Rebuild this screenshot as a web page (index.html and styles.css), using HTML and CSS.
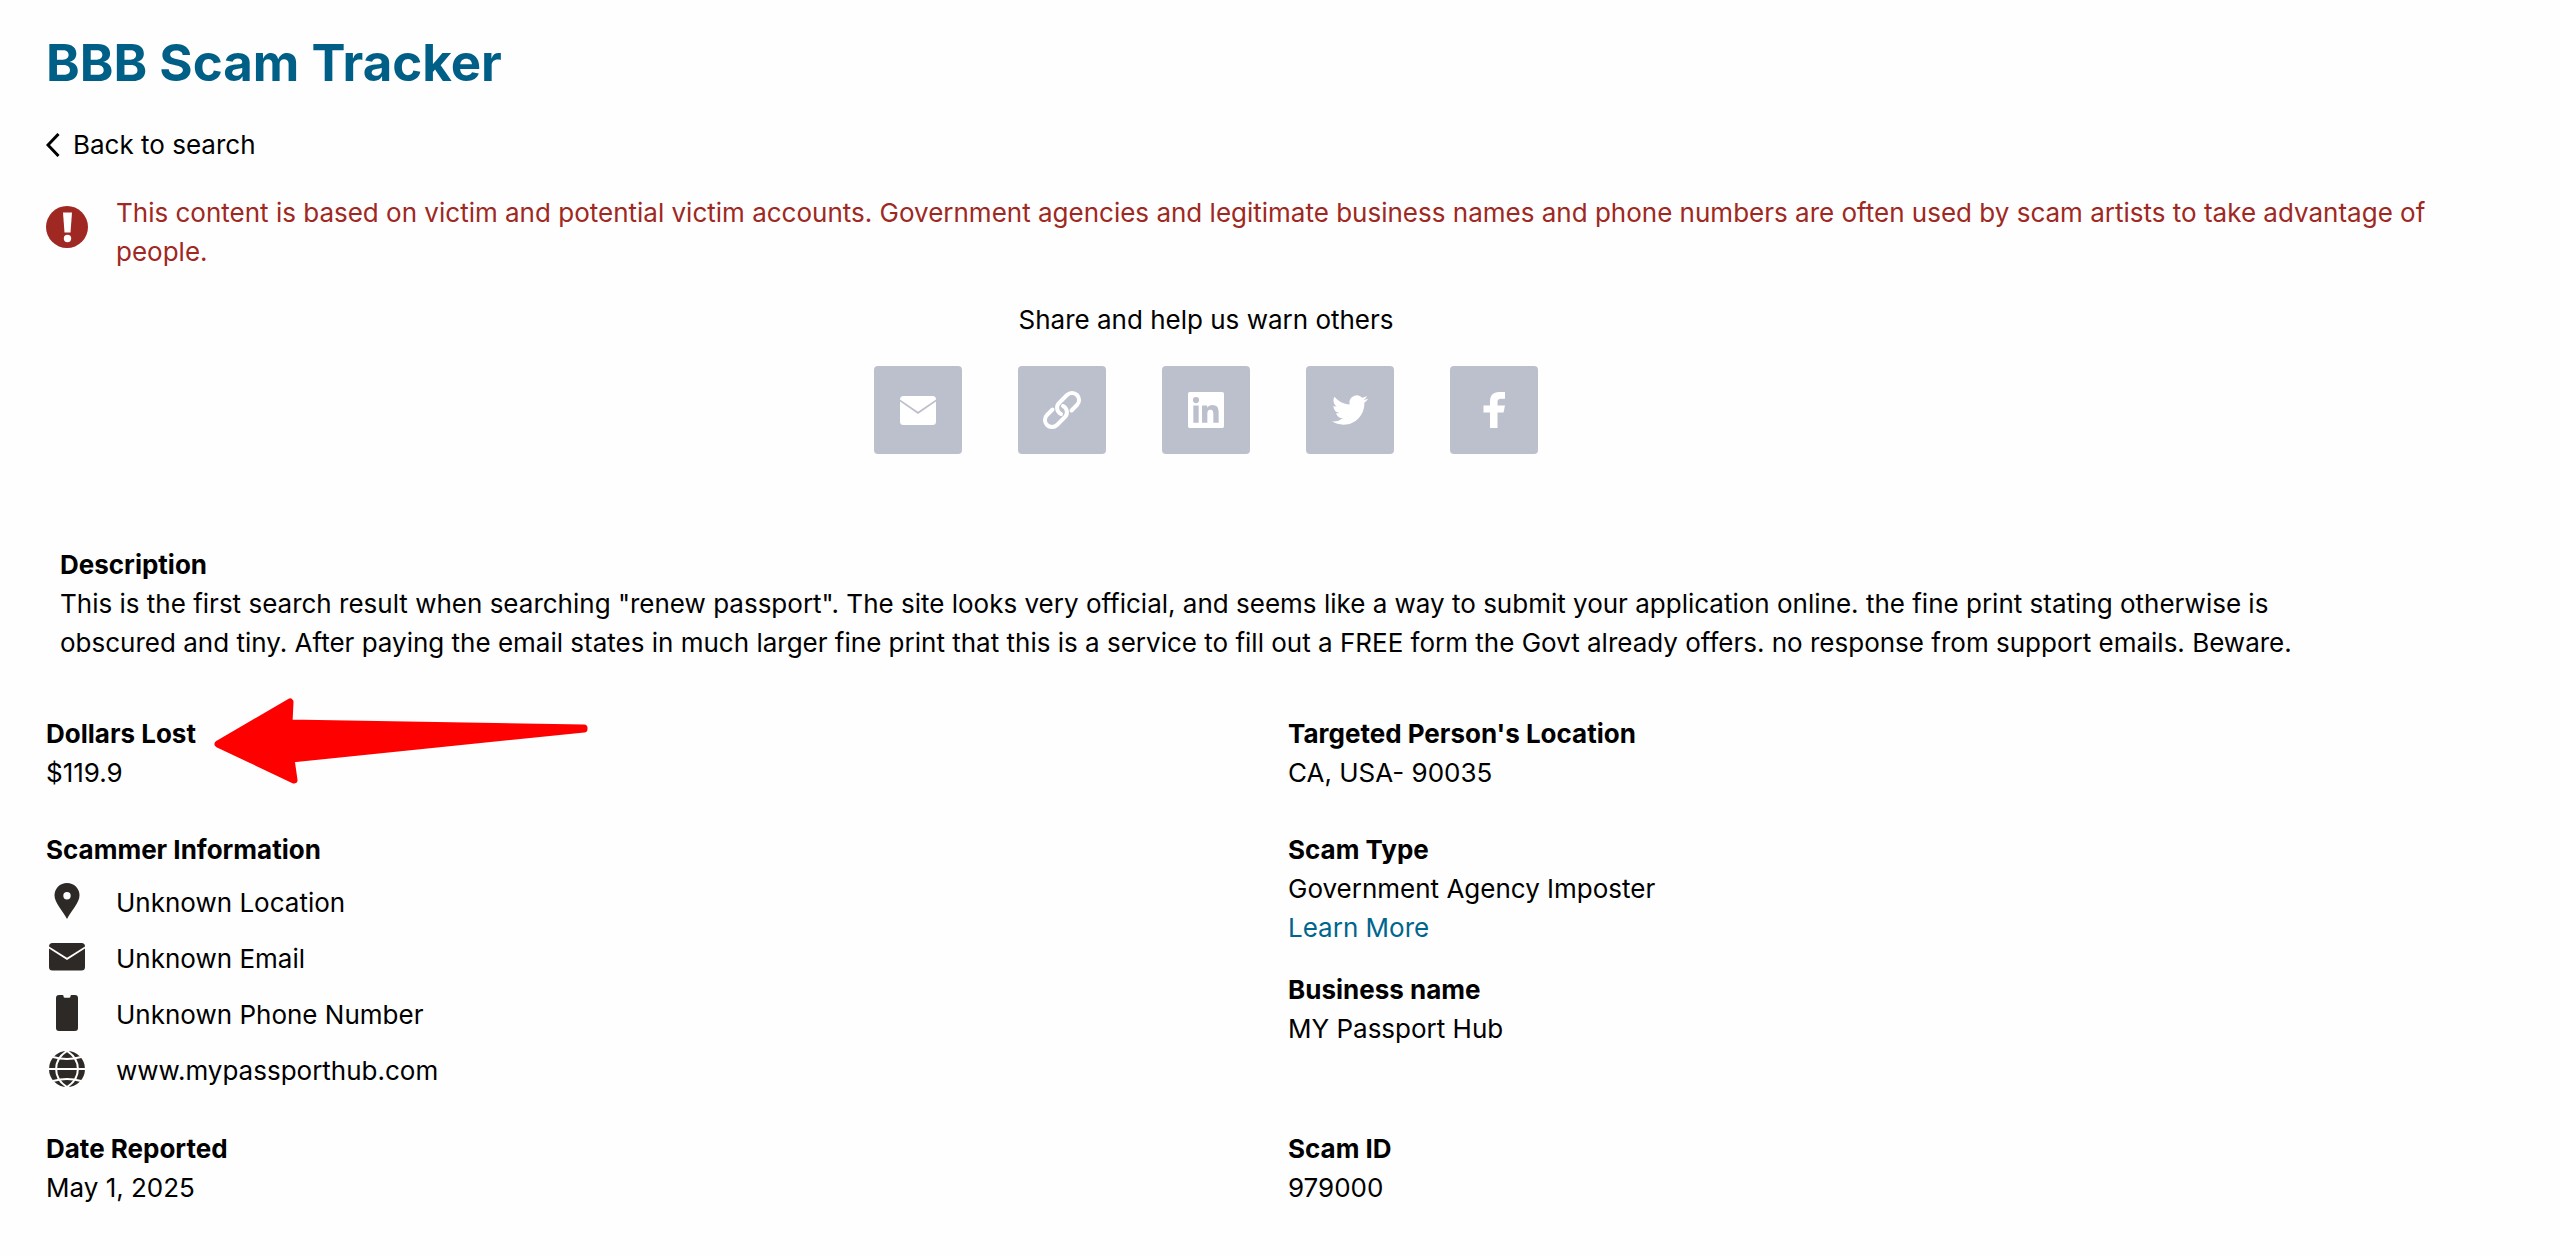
FILE: index.html
```html
<!DOCTYPE html>
<html lang="en">
<head>
<meta charset="utf-8">
<meta name="viewport" content="width=device-width, initial-scale=1">
<title>BBB Scam Tracker</title>
<link rel="stylesheet" href="styles.css">
</head>
<body>
<main class="page">
  <h1 class="title">BBB Scam Tracker</h1>

  <a class="back" href="#search">
    <svg class="back-icon" viewBox="0 0 14 24" aria-hidden="true"><path d="M12.500 1 2 12l10.500 11" fill="none" stroke="currentColor" stroke-width="3"/></svg>
    Back to search
  </a>

  <div class="alert" role="note">
    <svg class="alert-icon" viewBox="0 0 42 42" aria-hidden="true"><circle cx="21" cy="21" r="21" fill="#9f2822"/><path d="M17 6.500h9l-1.500 20h-6z" fill="#fff"/><circle cx="21.500" cy="32.500" r="3.700" fill="#fff"/></svg>
    <p class="alert-text">This content is based on victim and potential victim accounts. Government agencies and legitimate business names and phone numbers are often used by scam artists to take advantage of people.</p>
  </div>

  <section class="share">
    <p class="share-label">Share and help us warn others</p>
    <div class="share-buttons">
      <button class="share-button" type="button" aria-label="Share by email">
        <svg class="icon" viewBox="0 0 36 36"><path d="M0 7.500A3.500 3.500 0 0 1 3.500 4h29A3.500 3.500 0 0 1 36 7.500L18 19.800z"/><path d="M0 9.600 18 22l18-12.400V29.500a3.500 3.500 0 0 1-3.500 3.500h-29A3.500 3.500 0 0 1 0 29.500z"/></svg>
      </button>
      <button class="share-button" type="button" aria-label="Copy link">
        <svg class="icon icon-link" viewBox="0 0 40 40"><g fill="none" stroke="currentColor" stroke-width="4" stroke-linecap="round"><path d="M19 24a7 7 0 0 1-2.500-10.500l8.500-8.500a7 7 0 0 1 10 10l-5.500 5.500"/><path d="M21 16a7 7 0 0 1 2.500 10.500l-8.500 8.500a7 7 0 0 1-10-10l5.500-5.500"/></g></svg>
      </button>
      <button class="share-button" type="button" aria-label="Share on LinkedIn">
        <svg class="icon" viewBox="0 0 24 24"><path d="M20.447 20.452h-3.554v-5.569c0-1.328-.027-3.037-1.852-3.037-1.853 0-2.136 1.445-2.136 2.939v5.667H9.351V9h3.414v1.561h.046c.477-.9 1.637-1.850 3.370-1.850 3.601 0 4.267 2.370 4.267 5.455v6.286zM5.337 7.433a2.062 2.062 0 0 1-2.063-2.065 2.064 2.064 0 1 1 2.063 2.065zm1.782 13.019H3.555V9h3.564v11.452zM22.800 0H1.200C.54 0 0 .54 0 1.200v21.600C0 23.460.54 24 1.200 24h21.600c.66 0 1.200-.54 1.200-1.200V1.200C24 .54 23.460 0 22.800 0z"/></svg>
      </button>
      <button class="share-button" type="button" aria-label="Share on Twitter">
        <svg class="icon" viewBox="0 0 24 24"><path d="M23.953 4.570a10 10 0 0 1-2.825.775 4.958 4.958 0 0 0 2.163-2.723c-.951.555-2.005.959-3.127 1.184a4.920 4.920 0 0 0-8.384 4.482C7.690 8.095 4.067 6.130 1.640 3.162a4.822 4.822 0 0 0-.666 2.475c0 1.710.870 3.213 2.188 4.096a4.904 4.904 0 0 1-2.228-.616v.060a4.923 4.923 0 0 0 3.946 4.827 4.996 4.996 0 0 1-2.212.085 4.936 4.936 0 0 0 4.604 3.417 9.867 9.867 0 0 1-6.102 2.105c-.390 0-.779-.023-1.170-.067a13.995 13.995 0 0 0 7.557 2.209c9.053 0 13.998-7.496 13.998-13.985 0-.210 0-.420-.015-.630A9.935 9.935 0 0 0 24 4.590z"/></svg>
      </button>
      <button class="share-button" type="button" aria-label="Share on Facebook">
        <svg class="icon" viewBox="0 0 36 36"><path d="M14 36V20.500H7.500v-7H14V9.500C14 3.500 17 0 23 0h6v6.800h-3.800c-3 0-3.700 1.300-3.700 3.700v3H29l-1.500 7h-6V36z"/></svg>
      </button>
    </div>
  </section>

  <section class="description">
    <h2 class="label">Description</h2>
    <p>This is the first search result when searching "renew passport". The site looks very official, and seems like a way to submit your application online. the fine print stating otherwise is obscured and tiny. After paying the email states in much larger fine print that this is a service to fill out a FREE form the Govt already offers. no response from support emails. Beware.</p>
  </section>

  <div class="details">
    <section class="lost">
      <h2 class="label">Dollars Lost</h2>
      <p>$119.9</p>
      <svg class="arrow" viewBox="0 0 374 88" aria-hidden="true"><path d="M4 46 76 4l-1 21 295 5v1L77 61l3 21z" fill="#f00" stroke="#f00" stroke-width="7" stroke-linejoin="round"/></svg>
    </section>
    <section>
      <h2 class="label">Targeted Person's Location</h2>
      <p>CA, USA- 90035</p>
    </section>
    <section>
      <h2 class="label">Scammer Information</h2>
      <ul class="contacts">
        <li class="contact">
          <svg class="icon" viewBox="0 0 36 36" aria-hidden="true"><path fill-rule="evenodd" d="M18 0C11 0 5.500 5.500 5.500 12.300 5.500 20 14 28 18 36c4-8 12.500-16 12.500-23.700C30.500 5.500 25 0 18 0zm0 9a3.700 3.700 0 1 1 0 7.400A3.700 3.700 0 0 1 18 9z"/></svg>
          Unknown Location
        </li>
        <li class="contact">
          <svg class="icon" viewBox="0 0 36 36" aria-hidden="true"><path d="M0 7.500A3.500 3.500 0 0 1 3.500 4h29A3.500 3.500 0 0 1 36 7.500L18 18.800z"/><path d="M0 9.600 18 21l18-11.400V28a3.500 3.500 0 0 1-3.500 3.500h-29A3.500 3.500 0 0 1 0 28z"/></svg>
          Unknown Email
        </li>
        <li class="contact">
          <svg class="icon" viewBox="0 0 36 36" aria-hidden="true"><path d="M10 0h3.500q1 0 1 1.200 0 1.600 1.500 1.600h4q1.500 0 1.500-1.600 0-1.200 1-1.200H26a3 3 0 0 1 3 3v30a3 3 0 0 1-3 3H10a3 3 0 0 1-3-3V3a3 3 0 0 1 3-3z"/></svg>
          Unknown Phone Number
        </li>
        <li class="contact">
          <svg class="icon" viewBox="0 0 36 36" aria-hidden="true"><circle cx="18" cy="18" r="18"/><g fill="none" stroke="#fefefe" stroke-width="2"><path d="M0 18h36M4 6q14 4 28 0M4 30q14-4 28 0"/><path d="M18 0C3.500 9 3.500 27 18 36 32.500 27 32.500 9 18 0z"/></g></svg>
          www.mypassporthub.com
        </li>
      </ul>
    </section>
    <section>
      <h2 class="label">Scam Type</h2>
      <p>Government Agency Imposter</p>
      <a class="link" href="#learn-more">Learn More</a>
      <h2 class="label label-next">Business name</h2>
      <p>MY Passport Hub</p>
    </section>
    <section>
      <h2 class="label">Date Reported</h2>
      <p>May 1, 2025</p>
    </section>
    <section>
      <h2 class="label">Scam ID</h2>
      <p>979000</p>
    </section>
  </div>
</main>
</body>
</html>
```
FILE: styles.css
```css
* {
  box-sizing: border-box;
}

body {
  margin: 0;
  background: #fefefe;
  color: #000;
  font: 26px/39px Inter, "Liberation Sans", sans-serif;
}

h1,
h2,
p,
ul {
  margin: 0;
  padding: 0;
}

.page {
  padding: 33px 30px 48px 46px;
}

.title {
  color: #005f86;
  font-size: 51px;
  line-height: 60px;
  font-weight: 700;
}

.back {
  display: flex;
  align-items: center;
  gap: 13px;
  width: fit-content;
  margin-top: 32px;
  color: inherit;
  text-decoration: none;
}

.back-icon {
  width: 14px;
  height: 24px;
}

.alert {
  display: flex;
  align-items: flex-start;
  gap: 28px;
  margin-top: 29px;
  padding-right: 3%;
  color: #9f2822;
}

.alert-icon {
  flex: none;
  width: 42px;
  height: 42px;
  margin-top: 13px;
}

.share {
  width: 93.4%;
  margin-top: 29px;
  text-align: center;
}

.share-buttons {
  display: flex;
  justify-content: center;
  gap: 56px;
  margin-top: 27px;
}

.share-button {
  display: grid;
  place-items: center;
  width: 88px;
  height: 88px;
  padding: 0;
  border: 0;
  border-radius: 4px;
  background: #bcc0cc;
  color: #fff;
  cursor: pointer;
}

.icon {
  width: 36px;
  height: 36px;
  fill: currentColor;
}

.icon-link {
  width: 40px;
  height: 40px;
}

.description {
  width: 93.4%;
  margin-top: 92px;
  padding: 0 52px 0 14px;
}

.label {
  font-size: 26px;
  line-height: 38px;
  font-weight: 700;
}

.label-next {
  margin-top: 24px;
}

.details {
  display: grid;
  grid-template-columns: 1fr 1fr;
  row-gap: 39px;
  margin-top: 53px;
}

.lost {
  position: relative;
}

.arrow {
  position: absolute;
  left: 168px;
  top: -17px;
  width: 374px;
  height: 88px;
}

.contacts {
  display: grid;
  gap: 16px;
  margin-top: 14px;
  list-style: none;
}

.contact {
  display: flex;
  align-items: flex-start;
  gap: 31px;
  height: 40px;
  padding-left: 3px;
}

.contact .icon {
  flex: none;
  fill: #2d2926;
}

.link {
  display: block;
  width: fit-content;
  color: #00658e;
  text-decoration: none;
}
```
